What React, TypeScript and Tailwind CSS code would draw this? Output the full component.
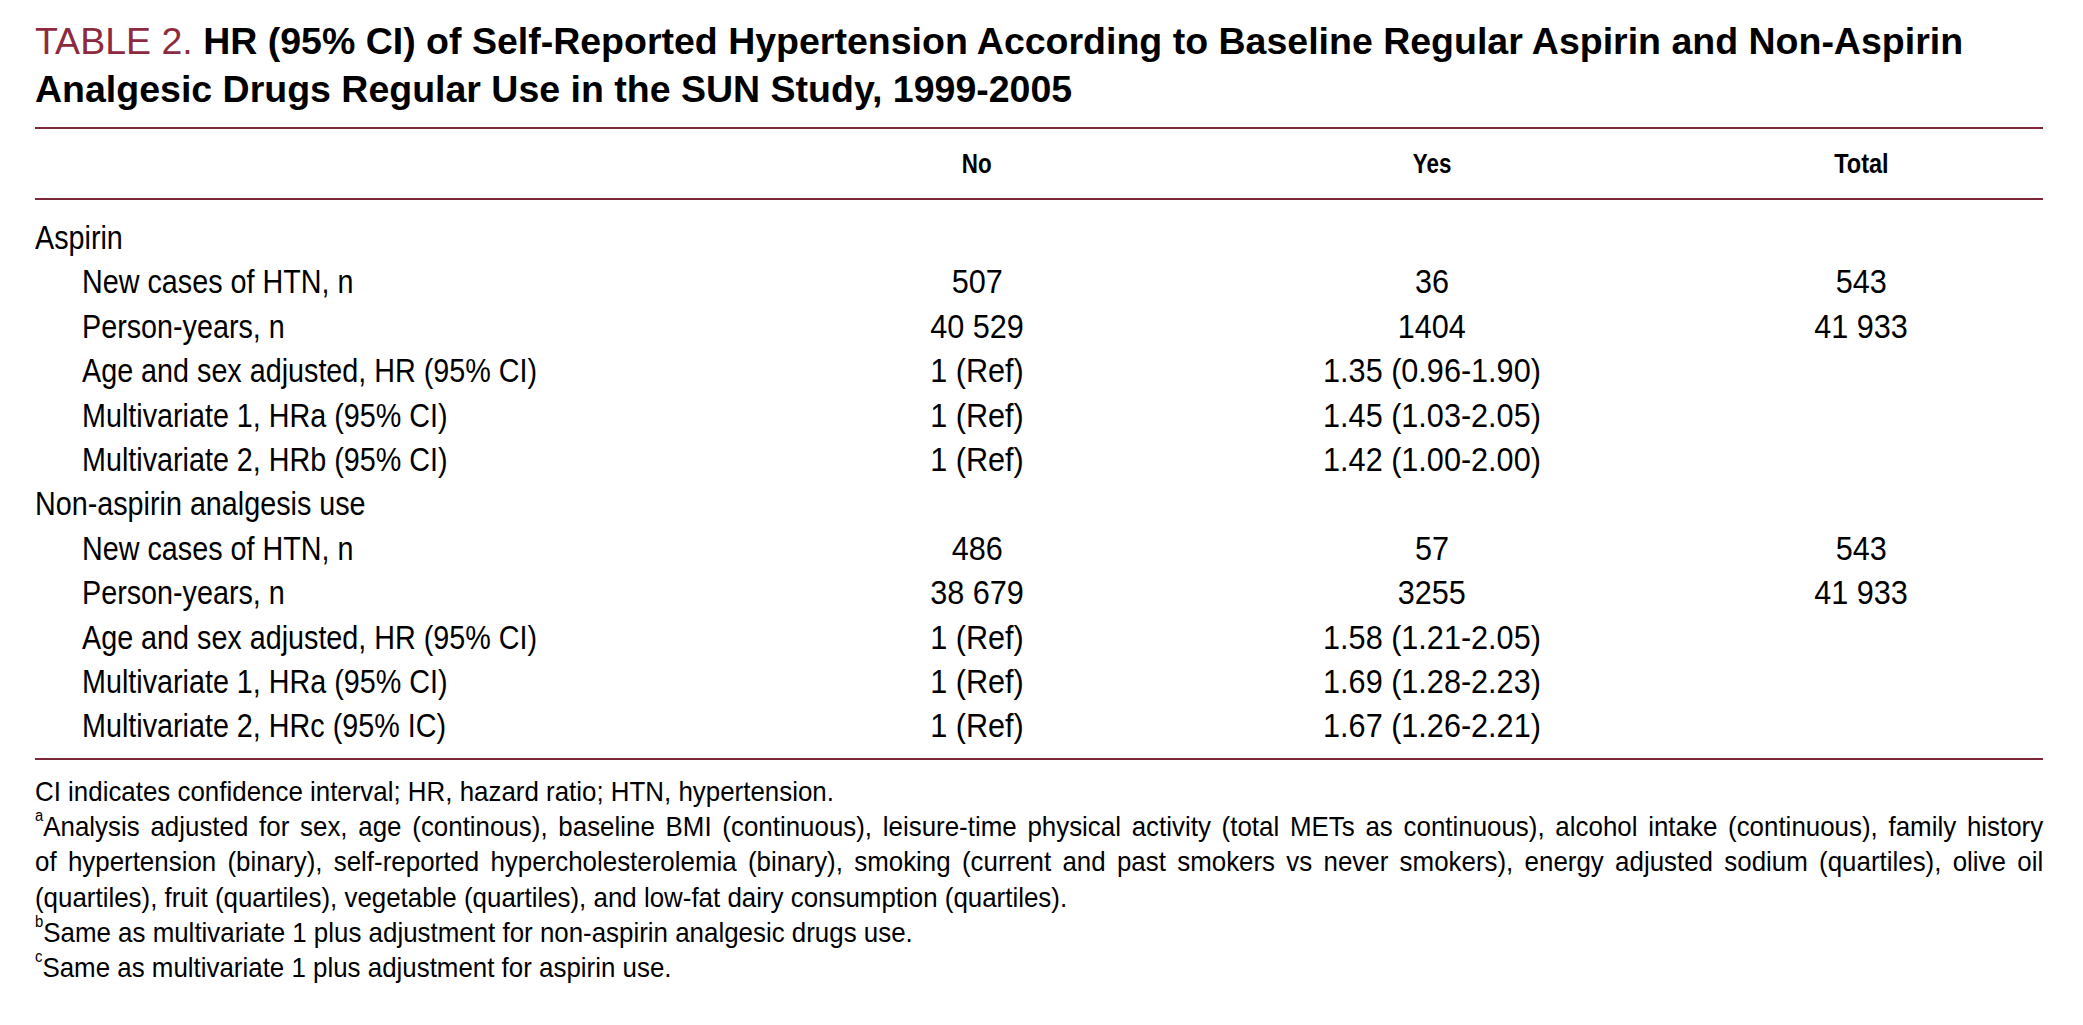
import React from "react";

const sans = "font-['Liberation_Sans',Arial,sans-serif]";

type Row = { label: string; indent: boolean; no?: string; yes?: string; total?: string };

const rows: Row[] = [
  { label: "Aspirin", indent: false },
  { label: "New cases of HTN, n", indent: true, no: "507", yes: "36", total: "543" },
  { label: "Person-years, n", indent: true, no: "40 529", yes: "1404", total: "41 933" },
  { label: "Age and sex adjusted, HR (95% CI)", indent: true, no: "1 (Ref)", yes: "1.35 (0.96-1.90)" },
  { label: "Multivariate 1, HRa (95% CI)", indent: true, no: "1 (Ref)", yes: "1.45 (1.03-2.05)" },
  { label: "Multivariate 2, HRb (95% CI)", indent: true, no: "1 (Ref)", yes: "1.42 (1.00-2.00)" },
  { label: "Non-aspirin analgesis use", indent: false },
  { label: "New cases of HTN, n", indent: true, no: "486", yes: "57", total: "543" },
  { label: "Person-years, n", indent: true, no: "38 679", yes: "3255", total: "41 933" },
  { label: "Age and sex adjusted, HR (95% CI)", indent: true, no: "1 (Ref)", yes: "1.58 (1.21-2.05)" },
  { label: "Multivariate 1, HRa (95% CI)", indent: true, no: "1 (Ref)", yes: "1.69 (1.28-2.23)" },
  { label: "Multivariate 2, HRc (95% IC)", indent: true, no: "1 (Ref)", yes: "1.67 (1.26-2.21)" },
];

function Num({ v }: { v?: string }) {
  return (
    <div className="text-center">
      {v ? <span className="inline-block scale-x-[0.9]">{v}</span> : null}
    </div>
  );
}

export default function App() {
  return (
    <div className="min-h-screen w-full overflow-hidden bg-white text-black">
      <div className="w-[2008px] ml-[35px] pt-[18px]">
        <h1 className={`${sans} text-[37.5px] leading-[47.5px] font-bold whitespace-nowrap`}>
          <span className="font-normal text-[#8e2a40]">TABLE 2.</span> HR (95% CI) of Self-Reported Hypertension According to Baseline Regular Aspirin and Non-Aspirin
          <br />
          Analgesic Drugs Regular Use in the SUN Study, 1999-2005
        </h1>

        <div className="mt-[14px] border-t-2 border-b-2 border-[#7b2838]">
          <div className={`grid grid-cols-[742px_400px_510px_348px] h-[69px] text-[28px] leading-[69px] font-bold ${sans}`}>
            <div />
            <div className="text-center"><span className="inline-block scale-x-[0.8]">No</span></div>
            <div className="text-center"><span className="inline-block scale-x-[0.8]">Yes</span></div>
            <div className="text-center"><span className="inline-block scale-x-[0.84]">Total</span></div>
          </div>
        </div>

        <div className={`pt-[15px] pb-[10px] border-b-2 border-[#7b2838] ${sans} text-[34px]`}>
          {rows.map((r, i) => (
            <div key={i} className="grid grid-cols-[742px_400px_510px_348px] h-[44.4px] leading-[44.4px] whitespace-nowrap">
              <div className={r.indent ? "pl-[47px]" : ""}>
                <span className="inline-block origin-left scale-x-[0.845]">{r.label}</span>
              </div>
              <Num v={r.no} />
              <Num v={r.yes} />
              <Num v={r.total} />
            </div>
          ))}
        </div>

        <div className={`pt-[14px] w-[2171px] origin-left scale-x-[0.925] ${sans} text-[28px] leading-[35.3px]`}>
          <div className="whitespace-nowrap">CI indicates confidence interval; HR, hazard ratio; HTN, hypertension.</div>
          <div className="whitespace-nowrap text-justify [text-align-last:justify]">
            <sup className="text-[16px] align-[7px] leading-none">a</sup>Analysis adjusted for sex, age (continous), baseline BMI (continuous), leisure-time physical activity (total METs as continuous), alcohol intake (continuous), family history
          </div>
          <div className="whitespace-nowrap text-justify [text-align-last:justify]">
            of hypertension (binary), self-reported hypercholesterolemia (binary), smoking (current and past smokers vs never smokers), energy adjusted sodium (quartiles), olive oil
          </div>
          <div className="whitespace-nowrap">(quartiles), fruit (quartiles), vegetable (quartiles), and low-fat dairy consumption (quartiles).</div>
          <div className="whitespace-nowrap">
            <sup className="text-[16px] align-[7px] leading-none">b</sup>Same as multivariate 1 plus adjustment for non-aspirin analgesic drugs use.
          </div>
          <div className="whitespace-nowrap">
            <sup className="text-[16px] align-[7px] leading-none">c</sup>Same as multivariate 1 plus adjustment for aspirin use.
          </div>
        </div>
      </div>
    </div>
  );
}
